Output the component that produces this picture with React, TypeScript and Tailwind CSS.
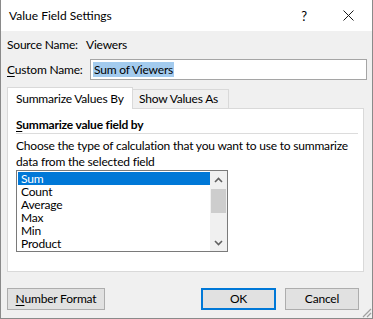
import React from "react";

const font = "font-['Lato','Noto_Sans',sans-serif]";

function Chevron({ up }: { up?: boolean }) {
  return (
    <svg width="9" height="6" viewBox="0 0 9 6" className="block">
      <path
        d={up ? "M1 5 L4.5 1.5 L8 5" : "M1 1 L4.5 4.5 L8 1"}
        fill="none"
        stroke="#606060"
        strokeWidth="1.6"
      />
    </svg>
  );
}

const items = ["Sum", "Count", "Average", "Max", "Min", "Product"];

export default function App() {
  return (
    <div
      className={`relative flex h-[319px] w-[373px] flex-col overflow-hidden whitespace-nowrap border-x border-b border-[#8a8a8a] bg-[#f0f0f0] text-[12px] leading-[16px] text-black ${font}`}
    >
      {/* title bar */}
      <div className="flex h-[31px] flex-none items-center bg-white pl-[8px]">
        <span className="flex-1 text-[12px]">Value Field Settings</span>
        <span className="mr-[36px] text-[13px]">?</span>
        <svg width="11" height="11" viewBox="0 0 11 11" className="mr-[18px] flex-none">
          <path d="M0.5 0.5 L10.5 10.5 M10.5 0.5 L0.5 10.5" stroke="#1a1a1a" strokeWidth="1" />
        </svg>
      </div>

      <div className="flex flex-1 flex-col px-[6px] tracking-[-0.2px]">
        <div className="mt-[6px] flex h-[16px] flex-none items-center">
          <span className="w-[79px] flex-none">Source Name:</span>
          <span>Viewers</span>
        </div>

        <div className="mt-[6px] flex h-[21px] flex-none items-center">
          <span className="w-[83px] flex-none">
            <span className="underline underline-offset-2">C</span>ustom Name:
          </span>
          <div className="flex h-[21px] w-[277px] flex-none items-center border border-[#a5a5a5] bg-white pl-[2px]">
            <span className="bg-[#a3cbee] px-px leading-[15px]">Sum of Viewers</span>
          </div>
        </div>

        {/* tabs */}
        <div className="mt-[7px] flex h-[21px] flex-none items-end">
          <div className="relative z-10 -mb-px flex h-[22px] w-[126px] flex-none items-center border-x border-t border-[#d9d9d9] bg-white pl-[8px]">
            Summarize Values By
          </div>
          <div className="flex h-[19px] w-[96px] flex-none items-center border-r border-t border-[#d9d9d9] bg-[#f0f0f0] pl-[6px]">
            Show Values As
          </div>
        </div>

        <div className="flex h-[164px] w-[357px] flex-none flex-col border border-[#d9d9d9] bg-white pl-[8px] pt-[8px]">
          <div className="font-bold">
            <span className="underline underline-offset-2">S</span>ummarize value field by
          </div>
          <div className="h-px w-[342px] flex-none bg-[#dcdcdc]" />
          <div className="mt-[4px]">
            Choose the type of calculation that you want to use to summarize
            <br />
            data from the selected field
          </div>
          <div className="flex h-[82px] w-[212px] flex-none border border-[#7a7a7a] bg-white p-px">
            <div className="flex flex-1 flex-col">
              {items.map((it, i) => (
                <div
                  key={it}
                  className={`h-[13px] flex-none pl-[3px] leading-[13px] ${i === 0 ? "bg-[#0078d7] text-white" : ""}`}
                >
                  {it}
                </div>
              ))}
            </div>
            <div className="-my-px -mr-px flex w-[17px] flex-none flex-col bg-[#f0f0f0]">
              <div className="flex h-[17px] flex-none items-center justify-center">
                <Chevron up />
              </div>
              <div className="mx-px mt-[1px] h-[24px] flex-none bg-[#cdcdcd]" />
              <div className="flex-1" />
              <div className="flex h-[17px] flex-none items-center justify-center">
                <Chevron />
              </div>
            </div>
          </div>
        </div>

        {/* buttons */}
        <div className="mt-[16px] flex h-[22px] flex-none items-stretch">
          <button className="w-[98px] flex-none border border-[#adadad] bg-[#e1e1e1] text-[12px]">
            <span className="underline underline-offset-2">N</span>umber Format
          </button>
          <div className="flex-1" />
          <button className="w-[75px] flex-none border-2 border-[#0078d7] bg-[#e1e1e1] text-[12px]">OK</button>
          <button className="ml-[9px] mr-[7px] w-[74px] flex-none border border-[#adadad] bg-[#e1e1e1] text-[12px]">
            Cancel
          </button>
        </div>
      </div>

      <svg width="12" height="12" viewBox="0 0 12 12" className="absolute bottom-0 right-0">
        <path d="M11 3 L3 11 M11 7 L7 11" stroke="#a0a0a0" strokeWidth="1.2" />
      </svg>
    </div>
  );
}
